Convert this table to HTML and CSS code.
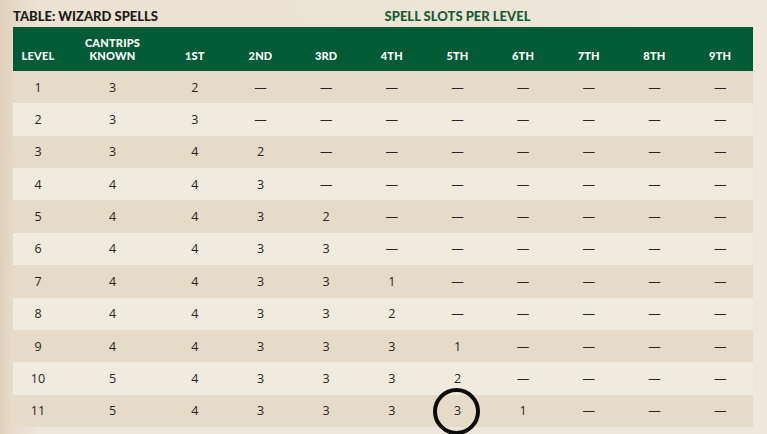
FILE: index.html
```html
<!DOCTYPE html>
<html lang="en">
<head>
<meta charset="utf-8">
<title>Table: Wizard Spells</title>
<link rel="stylesheet" href="styles.css">
</head>
<body>
<div class="page">
  <div class="titles">
    <h2 class="title">TABLE: WIZARD SPELLS</h2>
    <div class="slots-title">SPELL SLOTS PER LEVEL</div>
  </div>
  <table class="spells">
    <colgroup>
      <col class="c-level"><col class="c-cantrips">
      <col><col><col><col><col><col><col><col><col>
    </colgroup>
    <thead>
      <tr>
        <th>LEVEL</th><th>CANTRIPS<br>KNOWN</th>
        <th>1ST</th><th>2ND</th><th>3RD</th><th>4TH</th><th>5TH</th><th>6TH</th><th>7TH</th><th>8TH</th><th>9TH</th>
      </tr>
    </thead>
    <tbody>
      <tr><td>1</td><td>3</td><td>2</td><td>—</td><td>—</td><td>—</td><td>—</td><td>—</td><td>—</td><td>—</td><td>—</td></tr>
      <tr><td>2</td><td>3</td><td>3</td><td>—</td><td>—</td><td>—</td><td>—</td><td>—</td><td>—</td><td>—</td><td>—</td></tr>
      <tr><td>3</td><td>3</td><td>4</td><td>2</td><td>—</td><td>—</td><td>—</td><td>—</td><td>—</td><td>—</td><td>—</td></tr>
      <tr><td>4</td><td>4</td><td>4</td><td>3</td><td>—</td><td>—</td><td>—</td><td>—</td><td>—</td><td>—</td><td>—</td></tr>
      <tr><td>5</td><td>4</td><td>4</td><td>3</td><td>2</td><td>—</td><td>—</td><td>—</td><td>—</td><td>—</td><td>—</td></tr>
      <tr><td>6</td><td>4</td><td>4</td><td>3</td><td>3</td><td>—</td><td>—</td><td>—</td><td>—</td><td>—</td><td>—</td></tr>
      <tr><td>7</td><td>4</td><td>4</td><td>3</td><td>3</td><td>1</td><td>—</td><td>—</td><td>—</td><td>—</td><td>—</td></tr>
      <tr><td>8</td><td>4</td><td>4</td><td>3</td><td>3</td><td>2</td><td>—</td><td>—</td><td>—</td><td>—</td><td>—</td></tr>
      <tr><td>9</td><td>4</td><td>4</td><td>3</td><td>3</td><td>3</td><td>1</td><td>—</td><td>—</td><td>—</td><td>—</td></tr>
      <tr><td>10</td><td>5</td><td>4</td><td>3</td><td>3</td><td>3</td><td>2</td><td>—</td><td>—</td><td>—</td><td>—</td></tr>
      <tr><td>11</td><td>5</td><td>4</td><td>3</td><td>3</td><td>3</td><td class="marked">3<span class="ring"></span></td><td>1</td><td>—</td><td>—</td><td>—</td></tr>
    </tbody>
  </table>
</div>
</body>
</html>
```
FILE: styles.css
```css
html, body {
  margin: 0;
  padding: 0;
}
body {
  width: 767px;
  height: 434px;
  overflow: hidden;
  font-family: Lato, "Open Sans", sans-serif;
  color: #231f1c;
  background:
    linear-gradient(90deg, rgba(214,194,168,0.6) 0px, rgba(214,194,168,0.3) 14px, rgba(214,194,168,0) 40px),
    radial-gradient(ellipse at 20% 10%, #ece1d2 0%, rgba(236,225,210,0) 60%),
    #efe7dc;
}
.page {
  padding-left: 13px;
  width: 740px;
}
.titles {
  display: grid;
  grid-template-columns: 149px 1fr;
  height: 27px;
  align-items: center;
}
.title {
  margin: 0;
  padding-top: 4px;
  font-size: 13px;
  font-weight: 900;
  white-space: nowrap;
  color: #1d1a17;
}
.slots-title {
  padding-top: 4px;
  text-align: center;
  font-size: 13px;
  font-weight: 900;
  color: #155c34;
}
.spells {
  width: 740px;
  table-layout: fixed;
  border-collapse: collapse;
  border-spacing: 0;
}
.c-level { width: 50px; }
.c-cantrips { width: 99px; }
.spells th {
  background: #015c35;
  color: #ffffff;
  font-size: 11px;
  font-weight: 900;
  line-height: 13px;
  height: 44px;
  padding: 0 0 9px;
  vertical-align: bottom;
  text-align: center;
  letter-spacing: 0.2px;
  box-sizing: border-box;
}
.spells td {
  height: 32.36px;
  padding: 0;
  text-align: center;
  vertical-align: middle;
  font-family: "Open Sans", Lato, sans-serif;
  font-size: 12.5px;
  color: #2a2420;
  box-sizing: border-box;
}
.spells tbody tr:nth-child(odd) td {
  background: #e6dbc8;
}
.spells tbody tr:nth-child(even) td {
  background: #f1eadf;
}
.marked {
  position: relative;
}
.ring {
  position: absolute;
  left: 50%;
  top: 50%;
  width: 47px;
  height: 47px;
  margin: -23px 0 0 -24px;
  box-sizing: border-box;
  border: 4px solid #0b0b0b;
  border-radius: 50%;
}
```
